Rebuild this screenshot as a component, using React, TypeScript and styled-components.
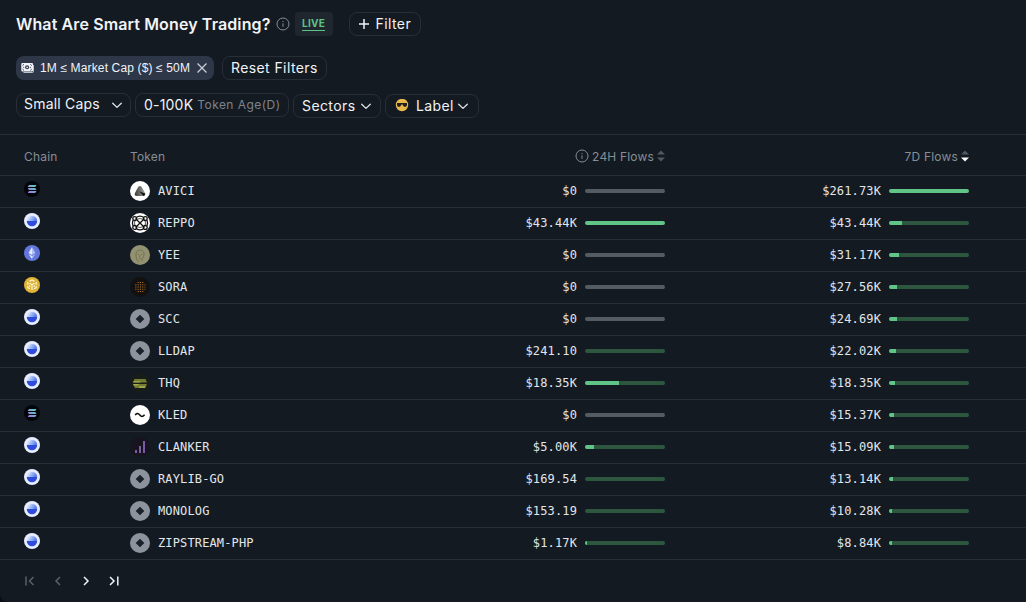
import React from "react";
import styled, { createGlobalStyle } from "styled-components";

const GlobalStyle = createGlobalStyle`
  *, *::before, *::after { box-sizing: border-box; }
  html, body { margin: 0; padding: 0; background: #0b0f14; }
  body { font-family: Inter, "Liberation Sans", sans-serif; color: #f0f3f7; }
  svg { display: block; flex: none; }
`;

const Panel = styled.main`
  width: 1026px;
  height: 602px;
  background: #141a21;
  border-radius: 0 0 0 8px;
  overflow: hidden;
`;

const TitleBar = styled.header`
  display: flex;
  align-items: center;
  height: 24px;
  margin: 12px 16px 0;
`;

const Title = styled.h1`
  margin: 0 5px 0 0;
  font-size: 16px;
  font-weight: 600;
  line-height: 24px;
  letter-spacing: 0.12px;
  white-space: nowrap;
`;

const LiveBadge = styled.span`
  display: flex;
  justify-content: center;
  width: 38px;
  height: 24px;
  margin: 0 16px 0 5px;
  padding-top: 5px;
  border-radius: 4px;
  background: #20262e;
  color: #5cc489;
  font-size: 10px;
  font-weight: 700;
  line-height: 13px;
  letter-spacing: 0.3px;
  span { height: 14px; border-bottom: 1px solid #5cc489; }
`;

const Pill = styled.button<{ $width: number; $top?: number; $pad?: number; $spacing?: number }>`
  display: flex;
  align-items: center;
  flex: none;
  width: ${(p) => p.$width}px;
  height: 24px;
  margin: ${(p) => p.$top ?? 0}px 0 0;
  padding: 0 ${(p) => p.$pad ?? 8}px;
  border: 1px solid #272e36;
  border-radius: 8px;
  background: transparent;
  color: #f0f3f7;
  font: 400 14px/22px Inter, sans-serif;
  letter-spacing: ${(p) => p.$spacing ?? 0.4}px;
  white-space: nowrap;
`;

const PillText = styled.span<{ $indent?: number; $lift?: number }>`
  margin: 0 auto ${(p) => p.$lift ?? 0}px ${(p) => p.$indent ?? 0}px;
`;

const Hint = styled.span`
  margin-left: 4px;
  color: #7c848d;
  font-size: 12px;
  letter-spacing: 0.45px;
`;

const FilterRow = styled.div<{ $top: number; $gap: number }>`
  display: flex;
  gap: ${(p) => p.$gap}px;
  margin: ${(p) => p.$top}px 16px 0;
`;

const Chip = styled.div`
  display: flex;
  align-items: center;
  width: 198px;
  height: 24px;
  padding: 0 6px 0 5px;
  border-radius: 8px;
  background: #2d3748;
  font: 400 12px/24px "Liberation Sans", Arial, sans-serif;
  letter-spacing: 0.14px;
  white-space: nowrap;
  span { margin: 0 auto 0 5px; }
`;

const Table = styled.section`
  margin-top: 16px;
  border-top: 1px solid #292f37;
`;

const columns = "130px 1fr 304px 361px";

const HeadRow = styled.div`
  display: grid;
  grid-template-columns: ${columns};
  align-items: center;
  height: 41px;
  padding-top: 2px;
  border-bottom: 1px solid #292f37;
  color: #858d96;
  font-size: 12px;
  letter-spacing: 0.18px;
`;

const Row = styled.div`
  display: grid;
  grid-template-columns: ${columns};
  align-items: center;
  height: 32px;
  padding-bottom: 1px;
  border-bottom: 1px solid #292f37;
  color: #e2e6eb;
  font-family: "DejaVu Sans Mono", monospace;
  font-size: 12px;
  letter-spacing: 0.13px;
`;

const ChainCell = styled.div`
  padding: 0 0 4px 24px;
`;

const HeadLabel = styled.div<{ $indent?: number }>`
  padding-left: ${(p) => p.$indent ?? 0}px;
`;

const TokenCell = styled.div`
  display: flex;
  align-items: center;
  gap: 8px;
`;

const FlowCell = styled.div<{ $inset: number }>`
  display: flex;
  align-items: center;
  justify-content: flex-end;
  gap: 8px;
  padding-right: ${(p) => p.$inset}px;
`;

const FlowHead = styled(FlowCell)`
  gap: 3px;
`;

const Track = styled.span<{ $empty: boolean }>`
  width: 80px;
  height: 4px;
  border-radius: 2px;
  overflow: hidden;
  background: ${(p) => (p.$empty ? "#555b63" : "#2c573e")};
`;

const Fill = styled.span`
  display: block;
  height: 4px;
  background: #62c588;
`;

const Pager = styled.nav`
  display: flex;
  gap: 12px;
  padding: 13px 22px;
`;

const PageButton = styled.button<{ $off?: boolean }>`
  padding: 0;
  border: 0;
  background: none;
  color: ${(p) => (p.$off ? "#5a616a" : "#f0f3f7")};
`;

const InfoIcon = () => (
  <svg width="14" height="14" viewBox="0 0 14 14" fill="none" stroke="#858d96">
    <circle cx="7" cy="7" r="6" />
    <path d="M7 6.3v3.5M7 4v1.1" />
  </svg>
);

const Chevron = () => (
  <svg width="12" height="12" viewBox="0 0 12 12" fill="none" stroke="#dfe3e8" strokeWidth="1.3" strokeLinecap="round" strokeLinejoin="round">
    <path d="M1.7 4.2 6 8.4l4.300-4.200" />
  </svg>
);

const SortIcon = ({ active }: { active?: boolean }) => (
  <svg width="8" height="12" viewBox="0 0 8 12">
    <path d="M0 4.5 4 .5l4 4z" fill="#515860" />
    <path d="M0 7.5h8l-4 4z" fill={active ? "#fff" : "#515860"} />
  </svg>
);

const MoneyIcon = () => (
  <svg width="14" height="12" viewBox="0 0 14 12">
    <path d="M12.500 3v6.500q0 1-1 1H2.500" fill="none" stroke="#b9c0ca" />
    <rect x=".3" y="1" width="11.700" height="8.600" rx="1" fill="#f3f5f8" />
    <circle cx="6.100" cy="5.300" r="2" fill="#2d3748" />
    <circle cx="6.100" cy="5.300" r=".9" fill="#f3f5f8" />
    <path d="M1.500 3.600 3 2.200M9.300 2.200l1.500 1.400M1.500 7 3 8.400M9.300 8.400 10.800 7M2.200 5.300h1M9 5.300h1" stroke="#2d3748" strokeWidth=".9" />
  </svg>
);

const SunglassesFace = () => (
  <svg width="14" height="14" viewBox="0 0 14 14">
    <circle cx="7" cy="6" r="6.200" fill="#e9b94a" />
    <path d="M2 4h10v1.800c0 1.400-.8 2-2 2S8.100 7.200 7.700 5.500H6.300C5.900 7.200 5.200 7.800 4 7.800s-2-.6-2-2z" fill="#20211f" />
  </svg>
);

type Chain = "sol" | "base" | "eth" | "bnb";

const ChainIcon = ({ chain }: { chain: Chain }) => (
  <svg width="16" height="16" viewBox="0 0 16 16">
    <defs>
      <linearGradient id="solana" x1="0" y1="1" x2="1" y2="0">
        <stop stopColor="#a071e5" />
        <stop offset="1" stopColor="#59d5b6" />
      </linearGradient>
      <linearGradient id="base" x1="0" y1="0" x2="1" y2="0.3">
        <stop offset=".15" stopColor="#dfe9ff" />
        <stop offset="1" stopColor="#5b7fe8" />
      </linearGradient>
    </defs>
    {chain === "sol" && (
      <>
        <circle cx="8" cy="8" r="8" fill="#03050a" />
        <path d="M5 4h7.500l-1.300 1.900H3.700zM3.700 7.050h7.500l1.300 1.900H5zM5 10.100h7.500L11.200 12H3.700z" fill="url(#solana)" />
      </>
    )}
    {chain === "base" && (
      <>
        <circle cx="8" cy="8" r="8" fill="#e5edff" />
        <path d="M2.800 8a5.200 5.200 0 0 1 10.400 0z" fill="url(#base)" />
        <path d="M2.800 8h10.400a5.200 5.200 0 0 1-10.400 0z" fill="#2f4bd8" />
      </>
    )}
    {chain === "eth" && (
      <>
        <circle cx="8" cy="8" r="8" fill="#6277dc" />
        <path d="m8 2-3.500 6L8 10z" fill="#e6eaff" />
        <path d="m8 2 3.500 6L8 10z" fill="#b4c0f5" />
        <path d="M4.500 9 8 14v-2.900z" fill="#e6eaff" />
        <path d="M11.500 9 8 14v-2.900z" fill="#b4c0f5" />
      </>
    )}
    {chain === "bnb" && (
      <>
        <circle cx="8" cy="8" r="8" fill="#dfb437" />
        <path d="m5.500 4.300 2.500-1.400 2.500 1.400M3.800 7.700V5.300M12.200 7.700V5.300M3.800 9.300v1.300l2 1.200M12.200 9.300v1.300l-2 1.200M5.500 6.300 8 7.700l2.500-1.400M8 7.700v5.200M5.700 8.600v1.500M10.300 8.600v1.500" fill="none" stroke="#fff7d8" strokeWidth="1.200" />
      </>
    )}
  </svg>
);

type Token = "avici" | "reppo" | "yee" | "sora" | "plain" | "thq" | "kled" | "clanker";

const TokenIcon = ({ token }: { token: Token }) => (
  <svg width="20" height="20" viewBox="0 0 20 20">
    <defs>
      <linearGradient id="avici" x1="0" y1="0" x2="1" y2="0">
        <stop stopColor="#3a3a3a" />
        <stop offset="1" stopColor="#a5a5a5" />
      </linearGradient>
    </defs>
    {token === "plain" && (
      <>
        <circle cx="10" cy="10" r="10" fill="#8c939d" />
        <path d="m10 5.700 4.300 4.300-4.300 4.300L5.700 10z" fill="#18202a" />
      </>
    )}
    {token === "avici" && (
      <>
        <circle cx="10" cy="10" r="10" fill="#fff" />
        <path d="M8.300 5.700q1.700-1.600 3.200 0l3.600 6.300q.8 2.800-1.800 3.100H6.500q-2.600-.5-1.500-3.100z" fill="url(#avici)" />
        <path d="m9.500 10.500 5.700 2q.2 2.400-1.900 2.600z" fill="#161616" />
      </>
    )}
    {token === "reppo" && (
      <>
        <circle cx="10" cy="10" r="10" fill="#fff" />
        <g fill="none" stroke="#111" strokeWidth="1.300">
          <path d="m5.500 5.500 9 9M14.500 5.500l-9 9" />
          <path d="M6.200 4.600Q10 1.800 13.800 4.600M6.200 15.400q3.800 2.800 7.600 0M3 7.200q-1.200 2.800 0 5.600M17 7.200q1.200 2.800 0 5.600" />
          <path d="M6.300 6.500Q10 4.500 13.700 6.500M6.300 13.500q3.700 2 7.400 0M5 7.300q-1 2.700 0 5.400M15 7.300q1 2.700 0 5.400" strokeWidth=".7" />
          <circle cx="4.700" cy="5.600" r="1.900" />
          <circle cx="15.300" cy="5.600" r="1.900" />
          <circle cx="4.700" cy="14.400" r="1.900" />
          <circle cx="15.300" cy="14.400" r="1.900" />
        </g>
      </>
    )}
    {token === "yee" && (
      <>
        <circle cx="10" cy="10" r="10" fill="#929172" />
        <path d="M6.500 14.500c0-2-1-3.500-.3-6.500.6-2.400 2.800-3.200 4.900-2.700 2.300.4 3.400 2 2.900 4.400-.3 1.800-.8 3.400-2.500 4.300M8 9l1.300.5M11.300 9.500l1.300-.5M10 10l-.7 2M9 13.200l2 .3M6.500 14.500l2.500 2M12 14v2" fill="none" stroke="#6f6c45" strokeWidth=".8" />
      </>
    )}
    {token === "sora" && (
      <>
        <circle cx="10" cy="10" r="10" fill="#12110f" />
        <path d="M7.600 5.500h6M5.300 7.750h10M5.300 12.250h10M7.600 14.500h6M5.300 10h10" stroke="#b87a35" strokeWidth="1.100" strokeDasharray="1.100 1.200" />
      </>
    )}
    {token === "thq" && (
      <>
        <circle cx="10" cy="10" r="10" fill="#181d1b" />
        <path d="M4.500 6h11l1.500 3.500H3zM3 11h14l-2 4H5z" fill="#727d31" />
        <path d="M3.300 8.300h7v1.200h-7zM3 11h6l-1 1.600H3.800zM9 13.300h6.800l-.9 1.700H9z" fill="#a5aa49" />
      </>
    )}
    {token === "kled" && (
      <>
        <circle cx="10" cy="10" r="10" fill="#fff" />
        <path d="M5.200 10.200C6.500 8 7.800 7.900 9.300 9.600s2.900 3 5.300.2" fill="none" stroke="#111" strokeWidth="1.500" />
      </>
    )}
    {token === "clanker" && (
      <>
        <circle cx="10" cy="10" r="10" fill="#17141f" />
        <path d="M5 13h2v3H5zM9 9h2v7H9zM13 4h2v12h-2z" fill="#795aa5" />
      </>
    )}
  </svg>
);

interface Entry {
  chain: Chain;
  icon: Token;
  name: string;
  day: string;
  dayFill: number | null;
  week: string;
  weekFill: number;
}

const entries: Entry[] = [
  { chain: "sol", icon: "avici", name: "AVICI", day: "$0", dayFill: null, week: "$261.73K", weekFill: 100 },
  { chain: "base", icon: "reppo", name: "REPPO", day: "$43.44K", dayFill: 100, week: "$43.44K", weekFill: 16.6 },
  { chain: "eth", icon: "yee", name: "YEE", day: "$0", dayFill: null, week: "$31.17K", weekFill: 11.9 },
  { chain: "bnb", icon: "sora", name: "SORA", day: "$0", dayFill: null, week: "$27.56K", weekFill: 10.5 },
  { chain: "base", icon: "plain", name: "SCC", day: "$0", dayFill: null, week: "$24.69K", weekFill: 9.4 },
  { chain: "base", icon: "plain", name: "LLDAP", day: "$241.10", dayFill: 0, week: "$22.02K", weekFill: 8.4 },
  { chain: "base", icon: "thq", name: "THQ", day: "$18.35K", dayFill: 42.2, week: "$18.35K", weekFill: 7 },
  { chain: "sol", icon: "kled", name: "KLED", day: "$0", dayFill: null, week: "$15.37K", weekFill: 5.9 },
  { chain: "base", icon: "clanker", name: "CLANKER", day: "$5.00K", dayFill: 11.5, week: "$15.09K", weekFill: 5.8 },
  { chain: "base", icon: "plain", name: "RAYLIB-GO", day: "$169.54", dayFill: 0, week: "$13.14K", weekFill: 5 },
  { chain: "base", icon: "plain", name: "MONOLOG", day: "$153.19", dayFill: 0, week: "$10.28K", weekFill: 3.9 },
  { chain: "base", icon: "plain", name: "ZIPSTREAM-PHP", day: "$1.17K", dayFill: 2.7, week: "$8.84K", weekFill: 3.4 },
];

const Flow = ({ value, fill, inset }: { value: string; fill: number | null; inset: number }) => (
  <FlowCell $inset={inset}>
    <span>{value}</span>
    <Track $empty={fill === null}>
      <Fill style={{ width: `${fill ?? 0}%` }} />
    </Track>
  </FlowCell>
);

const pagerPaths = ["M4 3.500v9M11.500 4 7.500 8l4 4", "M10 4 6 8l4 4", "m6 4 4 4-4 4", "m4 4 4 4-4 4M11.800 3.500v9"];
const pagerLabels = ["First page", "Previous page", "Next page", "Last page"];

export default function App() {
  return (
    <>
      <GlobalStyle />
      <Panel>
        <TitleBar>
          <Title>What Are Smart Money Trading?</Title>
          <InfoIcon />
          <LiveBadge><span>LIVE</span></LiveBadge>
          <Pill $width={72}>
            <svg width="12" height="12" viewBox="0 0 12 12" stroke="#f0f3f7" strokeWidth="1.500">
              <path d="M6 1v10M1 6h10" />
            </svg>
            <PillText $indent={6}>Filter</PillText>
          </Pill>
        </TitleBar>
        <FilterRow $top={20} $gap={8}>
          <Chip>
            <MoneyIcon />
            <span>1M ≤ Market Cap ($) ≤ 50M</span>
            <svg width="12" height="12" viewBox="0 0 12 12" stroke="#c8ced7" strokeWidth="1.300">
              <path d="m1.500 1.500 9 9M10.500 1.500l-9 9" />
            </svg>
          </Chip>
          <Pill $width={105}>Reset Filters</Pill>
        </FilterRow>
        <FilterRow $top={13} $gap={4}>
          <Pill $width={115} $pad={7} $spacing={0.2}><PillText $lift={2}>Small Caps</PillText><Chevron /></Pill>
          <Pill $width={154} $spacing={0.2}>0-100K<Hint>Token Age(D)</Hint></Pill>
          <Pill $width={88} $top={1}><PillText>Sectors</PillText><Chevron /></Pill>
          <Pill $width={94} $top={1} $pad={9}>
            <SunglassesFace />
            <PillText $indent={7}>Label</PillText>
            <Chevron />
          </Pill>
        </FilterRow>
        <Table>
          <HeadRow>
            <HeadLabel $indent={24}>Chain</HeadLabel>
            <HeadLabel>Token</HeadLabel>
            <FlowHead $inset={0}><InfoIcon />24H Flows<SortIcon /></FlowHead>
            <FlowHead $inset={57}>7D Flows<SortIcon active /></FlowHead>
          </HeadRow>
          {entries.map((e) => (
            <Row key={e.name}>
              <ChainCell><ChainIcon chain={e.chain} /></ChainCell>
              <TokenCell><TokenIcon token={e.icon} />{e.name}</TokenCell>
              <Flow value={e.day} fill={e.dayFill} inset={0} />
              <Flow value={e.week} fill={e.weekFill} inset={57} />
            </Row>
          ))}
        </Table>
        <Pager>
          {pagerPaths.map((d, i) => (
            <PageButton key={d} $off={i < 2} aria-label={pagerLabels[i]}>
              <svg width="16" height="16" viewBox="0 0 16 16" fill="none" stroke="currentColor" strokeWidth="1.500">
                <path d={d} />
              </svg>
            </PageButton>
          ))}
        </Pager>
      </Panel>
    </>
  );
}
